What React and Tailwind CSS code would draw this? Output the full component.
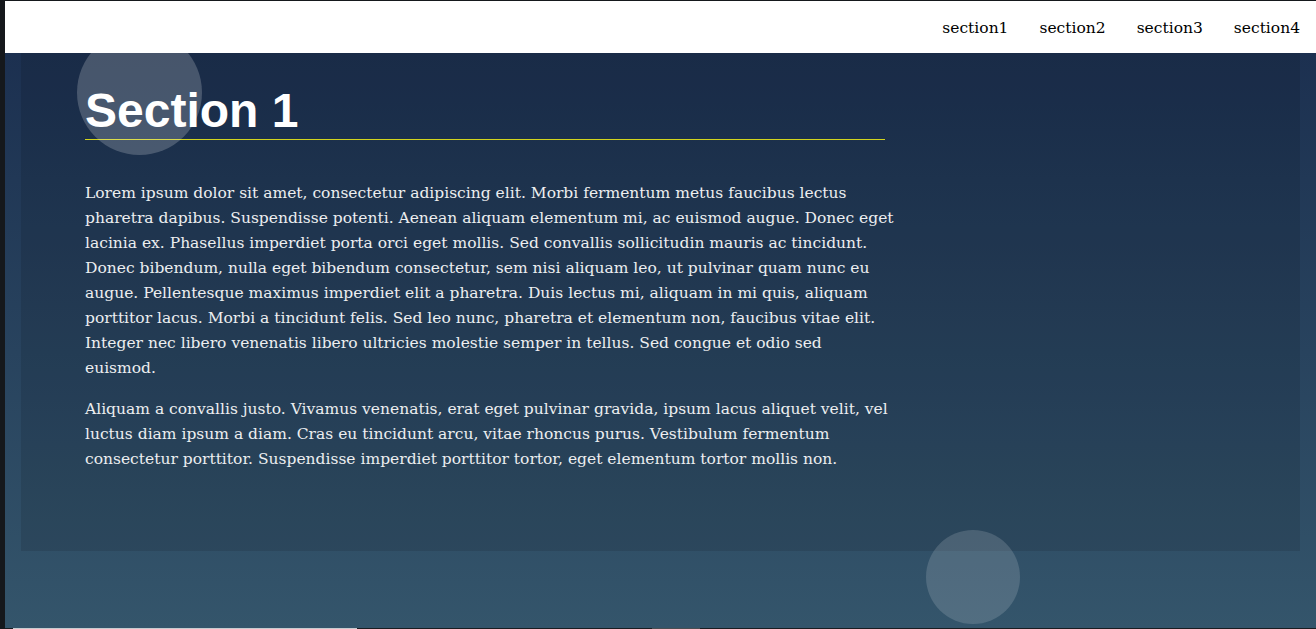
import React from "react";

const p1 = [
  "Lorem ipsum dolor sit amet, consectetur adipiscing elit. Morbi fermentum metus faucibus lectus",
  "pharetra dapibus. Suspendisse potenti. Aenean aliquam elementum mi, ac euismod augue. Donec eget",
  "lacinia ex. Phasellus imperdiet porta orci eget mollis. Sed convallis sollicitudin mauris ac tincidunt.",
  "Donec bibendum, nulla eget bibendum consectetur, sem nisi aliquam leo, ut pulvinar quam nunc eu",
  "augue. Pellentesque maximus imperdiet elit a pharetra. Duis lectus mi, aliquam in mi quis, aliquam",
  "porttitor lacus. Morbi a tincidunt felis. Sed leo nunc, pharetra et elementum non, faucibus vitae elit.",
  "Integer nec libero venenatis libero ultricies molestie semper in tellus. Sed congue et odio sed",
  "euismod.",
];
const p2 = [
  "Aliquam a convallis justo. Vivamus venenatis, erat eget pulvinar gravida, ipsum lacus aliquet velit, vel",
  "luctus diam ipsum a diam. Cras eu tincidunt arcu, vitae rhoncus purus. Vestibulum fermentum",
  "consectetur porttitor. Suspendisse imperdiet porttitor tortor, eget elementum tortor mollis non.",
];

function Lines({ lines }) {
  return lines.map((l, i) => (
    <React.Fragment key={i}>
      {l}
      {i < lines.length - 1 && <br />}
    </React.Fragment>
  ));
}

export default function App() {
  const serif = { fontFamily: '"DejaVu Serif", serif' };
  return (
    <div className="relative flex h-[629px] w-[1316px] overflow-hidden bg-[#16191d]">
      <div className="w-[5px] shrink-0 bg-[#15181c]" />
      <div className="flex flex-1 flex-col">
        <div className="h-[1px] bg-[#15181c]" />
        <nav
          className="relative z-20 flex h-[52px] items-center justify-end gap-[31px] bg-white pr-[16px] pt-[3px] text-[15.5px] text-black"
          style={serif}
        >
          <span>section1</span>
          <span>section2</span>
          <span>section3</span>
          <span>section4</span>
        </nav>
        <main className="flex h-[575px] flex-col bg-gradient-to-b from-[#1c3050] to-[#34556b] px-[16px]">
          <section className="h-[498px] bg-black/10 pl-[64px] pt-[34px]">
            <div className="w-[800px]">
              <h1
                className="pb-[4px] text-[48px] font-bold leading-[48px] text-white"
                style={{ fontFamily: '"Liberation Sans", Arial, sans-serif' }}
              >
                Section 1
              </h1>
              <div className="h-[1px] bg-[#d2d41e]" />
              <div
                className="mt-[41px] whitespace-nowrap text-[15.5px] leading-[25px] text-[#eceef0]"
                style={serif}
              >
                <p>
                  <Lines lines={p1} />
                </p>
                <p className="mt-[16px]">
                  <Lines lines={p2} />
                </p>
              </div>
            </div>
          </section>
        </main>
        <div className="flex h-[1px] bg-[#1a1d21]">
          <div className="w-[8px]" />
          <div className="w-[344px] bg-[#c8ccd0]" />
          <div className="w-[295px]" />
          <div className="w-[48px] bg-[#4a4e52]" />
        </div>
      </div>
      <div className="absolute left-[77px] top-[30px] z-10 h-[125px] w-[125px] rounded-full bg-white/20" />
      <div className="absolute left-[926px] top-[530px] z-10 h-[94px] w-[94px] rounded-full bg-white/15" />
    </div>
  );
}
